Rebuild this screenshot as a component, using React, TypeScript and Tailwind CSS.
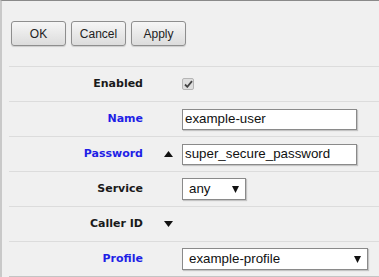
import React from 'react'

type Row = {
  label: string
  blue?: boolean
  arrow?: 'up' | 'down'
  control?: React.ReactNode
}

function Triangle({ dir }: { dir: 'up' | 'down' }) {
  return (
    <svg width="9" height="6" viewBox="0 0 9 6" className="block">
      {dir === 'up' ? <polygon points="0,6 9,6 4.5,0" fill="#111" /> : <polygon points="0,0 9,0 4.5,6" fill="#111" />}
    </svg>
  )
}

function SelectArrow() {
  return (
    <svg width="7" height="7" viewBox="0 0 7 7" className="block">
      <polygon points="0,0 7,0 3.5,7" fill="#111" />
    </svg>
  )
}

function Button({ children }: { children: React.ReactNode }) {
  return (
    <button className="w-[55px] h-[25px] rounded-[3px] border border-[#8e8e8e] bg-gradient-to-b from-[#f6f6f6] to-[#dcdcdc] shadow-[0_1px_1px_rgba(0,0,0,0.15)] text-[12px] text-[#222] font-['Liberation_Sans',Arial,sans-serif]">
      {children}
    </button>
  )
}

function TextInput({ value }: { value: string }) {
  return (
    <div className="w-[175px] h-[21px] bg-white border border-[#8a8a8a] shadow-[1px_1px_1px_rgba(0,0,0,0.18)] flex items-center pl-[2px] text-[13.33px] text-[#111] font-['Liberation_Sans',Arial,sans-serif]">
      {value}
    </div>
  )
}

function Select({ value, width }: { value: string; width: string }) {
  return (
    <div className={`${width} h-[22px] bg-white border border-[#8a8a8a] shadow-[1px_1px_1px_rgba(0,0,0,0.18)] flex items-center justify-between pl-[6px] pr-[6px] text-[13.33px] text-[#111] font-['Liberation_Sans',Arial,sans-serif]`}>
      <span>{value}</span>
      <SelectArrow />
    </div>
  )
}

function Checkbox() {
  return (
    <div className="w-[12px] h-[12px] rounded-[2px] border border-[#b5b5b5] bg-[#dedede] flex items-center justify-center">
      <svg width="9" height="8" viewBox="0 0 9 8">
        <path d="M1 4.5 L3.3 6.8 L8 1.2" stroke="#444" strokeWidth="1.8" fill="none" />
      </svg>
    </div>
  )
}

const rows: Row[] = [
  { label: 'Enabled', control: <Checkbox /> },
  { label: 'Name', blue: true, control: <TextInput value="example-user" /> },
  { label: 'Password', blue: true, arrow: 'up', control: <TextInput value="super_secure_password" /> },
  { label: 'Service', control: <Select value="any" width="w-[64px]" /> },
  { label: 'Caller ID', arrow: 'down' },
  { label: 'Profile', blue: true, control: <Select value="example-profile" width="w-[186px]" /> },
]

export default function App() {
  return (
    <div className="w-[379px] h-[277px] overflow-hidden bg-[#f0f0f0] border-t border-t-[#8a8a8a] border-l-2 border-l-[#c9c9c9]">
      <div className="flex gap-[5px] pt-[20px] pl-[9px] h-[65px]">
        <Button>OK</Button>
        <Button>Cancel</Button>
        <Button>Apply</Button>
      </div>
      <div className="ml-[7px] border-t border-t-[#dcdcdc]">
        {rows.map((r, i) => (
          <div
            key={r.label}
            className={`flex items-center h-[35px] border-b ${i === rows.length - 1 ? 'border-b-[#c4c4c4]' : 'border-b-[#dcdcdc]'}`}
          >
            <div
              className={`w-[134px] text-right text-[11px] font-bold font-['DejaVu_Sans',Verdana,sans-serif] ${r.blue ? 'text-[#1f1fe6]' : 'text-[#1a1a1a]'}`}
            >
              {r.label}
            </div>
            <div className="w-[39px] flex justify-center pl-[11px]">
              {r.arrow && <Triangle dir={r.arrow} />}
            </div>
            <div>{r.control}</div>
          </div>
        ))}
      </div>
    </div>
  )
}
